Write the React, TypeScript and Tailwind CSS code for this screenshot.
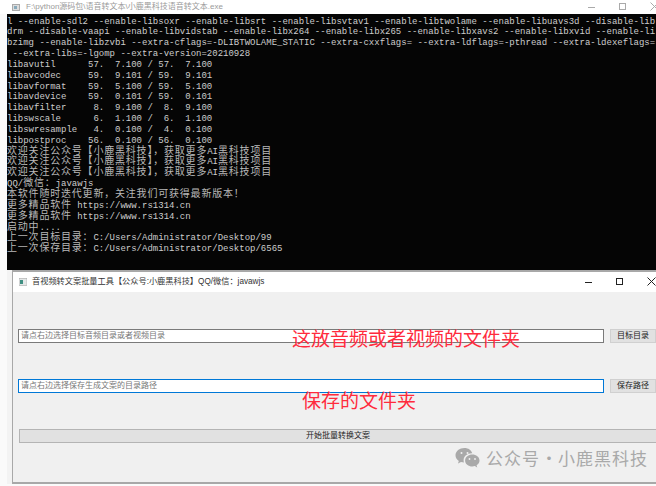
import React from "react";

const FONT_UI = "font-['Liberation_Sans','Noto_Sans_CJK_SC',sans-serif]";
const FONT_CJK = "font-['Noto_Sans_CJK_SC',sans-serif]";

const consoleLines = [
  "l --enable-sdl2 --enable-libsoxr --enable-libsrt --enable-libsvtav1 --enable-libtwolame --enable-libuavs3d --disable-lib",
  "drm --disable-vaapi --enable-libvidstab --enable-libx264 --enable-libx265 --enable-libxavs2 --enable-libxvid --enable-li",
  "bzimg --enable-libzvbi --extra-cflags=-DLIBTWOLAME_STATIC --extra-cxxflags= --extra-ldflags=-pthread --extra-ldexeflags=",
  " --extra-libs=-lgomp --extra-version=20210928",
  "libavutil      57.  7.100 / 57.  7.100",
  "libavcodec     59.  9.101 / 59.  9.101",
  "libavformat    59.  5.100 / 59.  5.100",
  "libavdevice    59.  0.101 / 59.  0.101",
  "libavfilter     8.  9.100 /  8.  9.100",
  "libswscale      6.  1.100 /  6.  1.100",
  "libswresample   4.  0.100 /  4.  0.100",
  "libpostproc    56.  0.100 / 56.  0.100",
  "欢迎关注公众号【小鹿黑科技】，获取更多AI黑科技项目",
  "欢迎关注公众号【小鹿黑科技】，获取更多AI黑科技项目",
  "欢迎关注公众号【小鹿黑科技】，获取更多AI黑科技项目",
  "QQ/微信：javawjs",
  "本软件随时迭代更新，关注我们可获得最新版本！",
  "更多精品软件 https://www.rs1314.cn",
  "更多精品软件 https://www.rs1314.cn",
  "启动中....",
  "上一次目标目录：C:/Users/Administrator/Desktop/99",
  "上一次保存目录：C:/Users/Administrator/Desktop/6565",
];

// console font: CJK cells are exactly twice the width of latin cells
function ConsoleLine({ text }: { text: string }) {
  const parts = text.split(/([\u3000-\u9fff\uff00-\uffef]+)/);
  return (
    <div className="h-[10.85px] whitespace-pre">
      {parts.map((part, i) =>
        i % 2 === 1 ? (
          <span key={i} className="text-[10px] tracking-[0.8px] text-[#b8b8b8]">
            {part}
          </span>
        ) : (
          <span key={i}>{part}</span>
        )
      )}
    </div>
  );
}

function WindowControls({ color }: { color: string }) {
  return (
    <svg width="71" height="14" viewBox="0 0 71 14" fill="none" stroke={color} strokeWidth="1">
      <path d="M0 7.500h7" />
      <rect x="31.500" y="3.500" width="6" height="6" />
      <path d="M62.500 2.500l8 8M70.500 2.500l-8 8" />
    </svg>
  );
}

function PathRow({ placeholder, label, focused }: { placeholder: string; label: string; focused?: boolean }) {
  return (
    <div className="flex h-[14px] items-stretch gap-[6px] pl-[5px]">
      <div
        className={`flex flex-1 items-center border bg-white pl-[2px] text-[8px] text-[#777] ${
          focused ? "border-[#0078d7]" : "border-[#7a7a7a]"
        }`}
      >
        {placeholder}
      </div>
      <div className="flex w-[46px] shrink-0 items-center justify-center border border-[#d0d0d0] bg-[#e1e1e1] text-[8px] text-[#222]">
        {label}
      </div>
    </div>
  );
}

export default function App() {
  return (
    <div className={`relative h-[486px] w-[656px] overflow-hidden bg-[#fafafa] ${FONT_UI}`}>
      {/* console window */}
      <div className="flex h-[14px] items-center justify-between bg-white pl-[12px]">
        <div className="flex items-center gap-[6px] text-[8px] text-[#9a9a9a]">
          <svg width="8" height="9" viewBox="0 0 8 9">
            <rect x="0.500" y="1.500" width="7" height="6" fill="#ddd" stroke="#aaa" />
            <rect x="2" y="3" width="3" height="3" fill="#8ab" />
          </svg>
          <span>F:\python源码包\语音转文本\小鹿黑科技语音转文本.exe</span>
        </div>
        <div className="mr-[-3px] flex">
          <WindowControls color="#aaa" />
        </div>
      </div>
      <div className="ml-[7px] h-[256px] overflow-hidden bg-[#050505] pt-[2.500px] font-['Liberation_Mono','Noto_Sans_CJK_SC',monospace] text-[9px] leading-[10.800px] text-[#cccccc]">
        {consoleLines.map((line, i) => (
          <ConsoleLine key={i} text={line} />
        ))}
      </div>

      {/* batch tool window */}
      <div className="ml-[7px] h-[214px] bg-[#f3f3f3] pl-[5px]">
        <div className="flex h-full flex-col border-t-2 border-b-2 border-l border-[#a8a8a8]">
          <div className="flex h-[20px] shrink-0 items-center justify-between bg-white pl-[6px]">
            <div className="flex items-center gap-[5px] text-[8.200px] text-[#333]">
              <svg width="8" height="8" viewBox="0 0 8 8">
                <rect x="0" y="0.500" width="8" height="7" fill="#e4e8e8" stroke="#999" strokeWidth="0.500" />
                <rect x="1" y="2" width="3" height="4" fill="#3f8f82" />
              </svg>
              <span>音视频转文案批量工具【公众号:小鹿黑科技】QQ/微信：javawjs</span>
            </div>
            <WindowControls color="#222" />
          </div>
          <div className="flex flex-1 flex-col bg-[#f0f0f0] pt-[37px]">
            <PathRow placeholder="请点右边选择目标音频目录或者视频目录" label="目标目录" />
            <div className="h-[36px]" />
            <PathRow placeholder="请点右边选择保存生成文案的目录路径" label="保存路径" focused />
            <div className="h-[36px]" />
            <div className="ml-[6px] flex h-[14px] items-center justify-center border border-r-0 border-[#b4b4b4] bg-[#e1e1e1] text-[8px] text-[#222]">
              开始批量转换文案
            </div>
          </div>
        </div>
      </div>

      {/* annotations drawn over the screenshot */}
      <div className={`absolute left-[292px] top-[325px] text-[19px] leading-[25px] text-[#ff2b3d] ${FONT_CJK}`}>
        这放音频或者视频的文件夹
      </div>
      <div className={`absolute left-[302px] top-[387px] text-[19px] leading-[25px] text-[#ff2b3d] ${FONT_CJK}`}>
        保存的文件夹
      </div>

      {/* watermark */}
      <div
        className={`absolute left-[455px] top-[448px] flex items-center text-[17px] leading-[20px] tracking-[1px] text-[#a9a9a9] ${FONT_CJK}`}
      >
        <svg width="25" height="20" viewBox="0 0 24 20" fill="#a9a9a9" className="mr-[6px]">
          <path d="M9 0C4 0 0 3.200 0 7.300c0 2.300 1.300 4.300 3.300 5.700L2.500 15.500l3-1.500c1 .3 2 .5 3 .5-.3-.8-.4-1.500-.4-2.300C8.100 8.300 12 5 16.800 5.300 15.900 2.200 12.800 0 9 0z" />
          <path d="M24 12.500C24 9 20.600 6.500 16.800 6.500S9.600 9 9.600 12.500s3.400 6 7.200 6c.9 0 1.700-.1 2.500-.4l2.400 1.400-.6-2.200c1.800-1.200 2.900-2.900 2.900-4.800z" />
          <circle cx="6" cy="5" r="1" fill="#f0f0f0" />
          <circle cx="12" cy="5" r="1" fill="#f0f0f0" />
          <circle cx="14" cy="11" r="0.900" fill="#f0f0f0" />
          <circle cx="19.500" cy="11" r="0.900" fill="#f0f0f0" />
        </svg>
        <span>公众号</span>
        <span className="w-[18px] text-center tracking-normal">·</span>
        <span>小鹿黑科技</span>
      </div>
    </div>
  );
}
